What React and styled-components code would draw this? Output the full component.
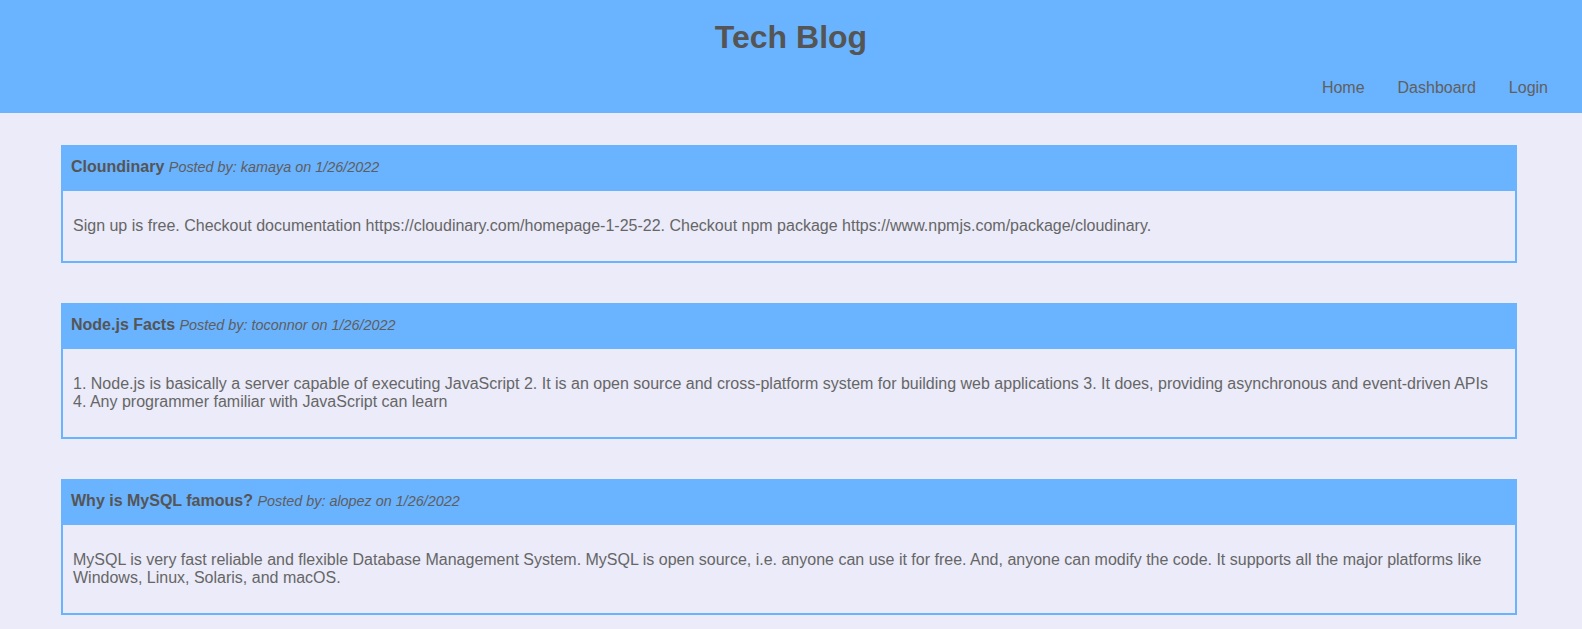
import React from "react";
import styled, { createGlobalStyle } from "styled-components";

const posts = [
  {
    id: 1,
    title: "Cloundinary",
    author: "kamaya",
    date: "1/26/2022",
    body: "Sign up is free. Checkout documentation https://cloudinary.com/homepage-1-25-22. Checkout npm package https://www.npmjs.com/package/cloudinary.",
  },
  {
    id: 2,
    title: "Node.js Facts",
    author: "toconnor",
    date: "1/26/2022",
    body: "1. Node.js is basically a server capable of executing JavaScript 2. It is an open source and cross-platform system for building web applications 3. It does, providing asynchronous and event-driven APIs 4. Any programmer familiar with JavaScript can learn",
  },
  {
    id: 3,
    title: "Why is MySQL famous?",
    author: "alopez",
    date: "1/26/2022",
    body: "MySQL is very fast reliable and flexible Database Management System. MySQL is open source, i.e. anyone can use it for free. And, anyone can modify the code. It supports all the major platforms like Windows, Linux, Solaris, and macOS.",
  },
];

const App = () => {
  return (
    <>
      <GlobalStyle />
      <Header>
        <Title>Tech Blog</Title>
        <Nav>
          <NavLink href="#">Home</NavLink>
          <NavLink href="#">Dashboard</NavLink>
          <NavLink href="#">Login</NavLink>
        </Nav>
      </Header>
      <Main>
        {posts.map((post) => (
          <Card key={post.id}>
            <CardHeader>
              <PostTitle>{post.title}</PostTitle>{" "}
              <PostMeta>
                Posted by: {post.author} on {post.date}
              </PostMeta>
            </CardHeader>
            <CardBody>
              <p>{post.body}</p>
            </CardBody>
          </Card>
        ))}
      </Main>
    </>
  );
};

const GlobalStyle = createGlobalStyle`
  body {
    margin: 0;
    background-color: #ebebf9;
    font-family: "Liberation Sans", Arial, sans-serif;
    color: #555;
  }
`;

const Header = styled.header`
  background-color: #6ab3ff;
  height: 113px;
  display: flex;
  flex-direction: column;
  box-sizing: border-box;
  padding-top: 19px;
`;

const Title = styled.h1`
  margin: 0;
  text-align: center;
  font-size: 32px;
  line-height: 37px;
  font-weight: bold;
  color: #555;
`;

const Nav = styled.nav`
  display: flex;
  justify-content: flex-end;
  gap: 33px;
  padding-right: 34px;
  margin-top: 23px;
`;

const NavLink = styled.a`
  font-size: 16px;
  line-height: 18px;
  color: #606060;
  text-decoration: none;
`;

const Main = styled.main`
  display: flex;
  flex-direction: column;
  gap: 40px;
  padding: 32px 65px 32px 61px;
`;

const Card = styled.article`
  border: 2px solid #6ab3ff;
`;

const CardHeader = styled.div`
  background-color: #6ab3ff;
  padding: 10px 8px 14px;
  line-height: 20px;
`;

const PostTitle = styled.span`
  font-size: 16px;
  font-weight: bold;
  color: #555;
`;

const PostMeta = styled.span`
  font-size: 14.4px;
  font-style: italic;
  color: #5e5e5e;
`;

const CardBody = styled.div`
  padding: 10px 12px 10px 10px;
  font-size: 16px;
  color: #666;

  p {
    margin: 16px 0;
  }
`;

export default App;
